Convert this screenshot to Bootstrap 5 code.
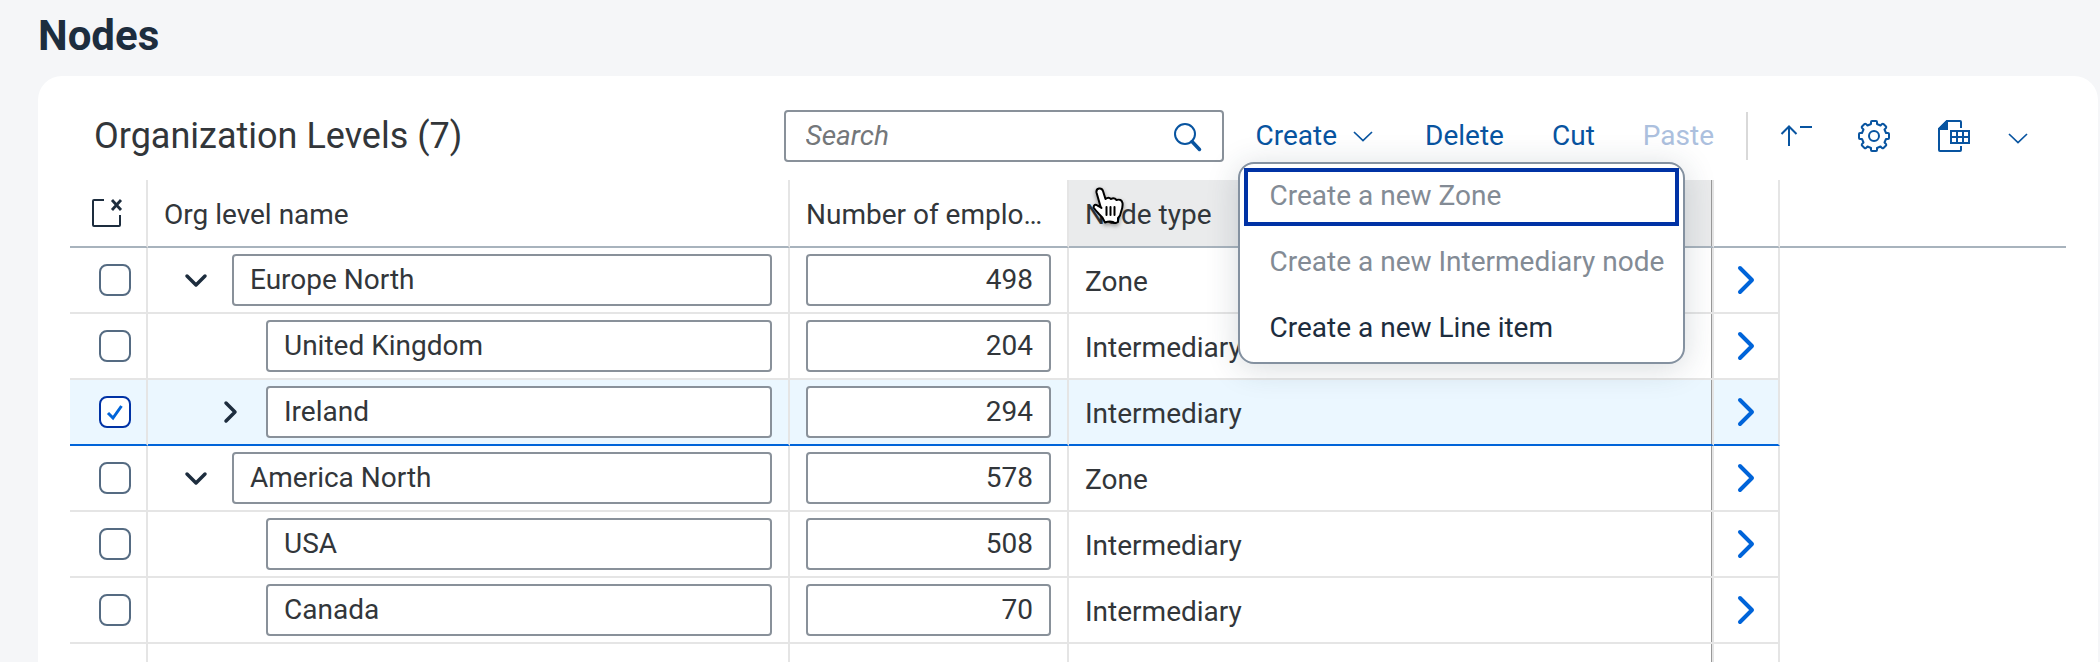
<!DOCTYPE html>
<html lang="en">
<head>
<meta charset="utf-8">
<meta name="viewport" content="width=device-width, initial-scale=1">
<title>Nodes</title>
<link rel="stylesheet" href="https://cdn.jsdelivr.net/npm/bootstrap@5.3.0/dist/css/bootstrap.min.css">
<style>
:root { --ink:#1d2d3e; --text:#32363a; --brand:#0854a0; --field:#89919a; --line:#e5e5e5; --accent:#0064d9; --focus:#0032a5; }
body { background:#f5f6f8; color:var(--text); font-family:Roboto,"Liberation Sans",sans-serif; font-size:28px; line-height:36px; }
.page { padding:12px 2px 0 38px; }
.page-title { font-size:42px; line-height:48px; color:var(--ink); font-weight:700; margin:0 0 16px; }
.panel { background:#fff; border-radius:24px 24px 0 0; padding:24px 32px 0; }
.toolbar { height:72px; margin-bottom:8px; padding:0 38px 0 24px; }
.toolbar h2 { font-size:36px; line-height:40px; margin:0; font-weight:400; }
.search { width:440px; }
.field { border:2px solid var(--field); border-radius:4px; background:#fff; color:var(--text); height:52px; width:100%; padding:0 16px 2px; display:block; font-size:28px; line-height:36px; }
.search .field { padding:0 64px 2px 20px; }
.search .field::placeholder { color:#74777a; font-style:italic; opacity:1; }
.search-go { position:absolute; right:8px; top:9px; width:44px; height:36px; color:var(--brand); }
.tool { border:0; background:none; padding:0; color:var(--brand); display:flex; align-items:center; height:52px; font-size:28px; }
.tool:disabled { color:#acc0de; }
.tool svg, .search-go svg, .expander svg, .go svg, .deselect svg { display:block; }
.split { margin-left:32px; }
.create-group { margin-right:4px; }
.more { margin-left:38px; }
.divider { width:2px; height:48px; background:#d9d9d9; }
.create-menu { top:52px; left:-18px; width:447px; padding:0; border:2px solid #8491a0; border-radius:16px; box-shadow:0 4px 32px rgba(34,53,72,.18); background:#fff; font-size:28px; }
.create-menu .dropdown-item { height:66px; padding:0 0 2px 30px; color:var(--ink); display:flex; align-items:center; background:none; }
.create-menu .dropdown-item:disabled { color:#838b95; }
.create-menu .focused { outline:4px solid var(--focus); outline-offset:-8px; }
.tree { table-layout:fixed; width:100%; border-collapse:separate; border-spacing:0; }
.tree th { height:68px; font-weight:400; padding:4px 16px 0; border-bottom:2px solid #a8b3bd; border-right:2px solid var(--line); white-space:nowrap; }
.tree td { height:66px; padding:0 16px; border-bottom:2px solid var(--line); border-right:2px solid var(--line); }
.tree th:last-child { border-right:0; }
.tree td:last-child { border:0; }
.tree .fixed-edge { box-shadow:inset -1px 0 0 #999; }
.tree th.hovered { background:#eaebec; position:relative; }
.tree tr.picked td:not(:last-child) { background:#ebf7ff; border-bottom-color:var(--accent); }
.tree tr.filler td { height:18px; border-bottom:0; }
.c-check { width:78px; } .c-name { width:642px; } .c-count { width:279px; } .c-type { width:645px; } .c-go { width:66px; }
.tree td.check-cell { padding:0 0 0 29px; }
.tree th.check-cell { padding:4px 0 0 22px; }
.tree .check-cell .form-check-input { width:32px; height:32px; margin:0; border:2px solid #556b82; border-radius:8px; display:block; background-color:#fff; }
.tree .check-cell .form-check-input:checked { border-color:var(--focus); background-image:url("data:image/svg+xml,%3csvg xmlns='http://www.w3.org/2000/svg' viewBox='0 0 28 28'%3e%3cpath d='M7 15l5 5 8.500-12' fill='none' stroke='%230064d9' stroke-width='3'/%3e%3c/svg%3e"); }
.node { padding-left:20px; }
.expander { border:0; background:none; padding:0 8px 0 0; width:64px; height:52px; display:flex; align-items:center; justify-content:center; flex:none; color:var(--ink); }
.leaf { width:98px; flex:none; }
.child .expander { margin-left:34px; }
.tree td.name-cell { padding:0 16px 0 0; }
.tree td.type-cell { padding-top:4px; }
.tree td.go-cell { padding:0; }
.go { display:flex; height:52px; align-items:center; justify-content:center; color:var(--accent); }
.deselect { border:0; background:none; padding:0; color:var(--ink); }
.pointer { position:absolute; left:20px; top:6px; filter:drop-shadow(0 2px 2px rgba(0,0,0,.4)); }
</style>
</head>
<body>
<svg width="0" height="0" class="position-absolute" aria-hidden="true">
  <symbol id="i-down" viewBox="0 0 24 24"><path d="M3 8l9 9 9-9" fill="none" stroke="currentColor" stroke-width="3.500" stroke-linecap="round" stroke-linejoin="round"/></symbol>
  <symbol id="i-right" viewBox="0 0 24 24"><path d="M8 3l9 9-9 9" fill="none" stroke="currentColor" stroke-width="3.500" stroke-linecap="round" stroke-linejoin="round"/></symbol>
  <symbol id="i-go" viewBox="0 0 32 32"><path d="M10 4l12 12-12 12" fill="none" stroke="currentColor" stroke-width="4" stroke-linecap="round" stroke-linejoin="round"/></symbol>
  <symbol id="i-slim" viewBox="0 0 20 12"><path d="M1 2l9 8.500L19 2" fill="none" stroke="currentColor" stroke-width="1.700"/></symbol>
</svg>
<main class="page min-vh-100">
  <h1 class="page-title">Nodes</h1>
  <section class="panel">
    <div class="toolbar d-flex align-items-center">
      <h2 class="me-auto">Organization Levels (7)</h2>
      <div class="search position-relative">
        <input class="field" type="search" placeholder="Search" aria-label="Search">
        <button class="search-go border-0 bg-transparent p-0" type="button" aria-label="Start search">
          <svg width="32" height="32" viewBox="0 0 32 32"><circle cx="13" cy="13" r="10" fill="none" stroke="currentColor" stroke-width="2"/><path d="M20 20.500l7.500 8" stroke="currentColor" stroke-width="3.500" stroke-linecap="round"/></svg>
        </button>
      </div>
      <div class="dropdown split create-group">
        <button class="tool" type="button" aria-expanded="true">Create <svg class="ms-3" width="20" height="12"><use href="#i-slim"/></svg></button>
        <div class="dropdown-menu show create-menu">
          <button class="dropdown-item focused" type="button" disabled>Create a new Zone</button>
          <button class="dropdown-item" type="button" disabled>Create a new Intermediary node</button>
          <button class="dropdown-item" type="button">Create a new Line item</button>
        </div>
      </div>
      <button class="tool ms-5" type="button">Delete</button>
      <button class="tool ms-5" type="button">Cut</button>
      <button class="tool ms-5" type="button" disabled>Paste</button>
      <div class="divider split me-4"></div>
      <button class="tool" type="button" aria-label="Sort"><svg width="48" height="32" viewBox="0 0 48 32"><path d="M17 26V7M9.500 14L17 6.500 24.500 14M28 7h12" fill="none" stroke="currentColor" stroke-width="2"/></svg></button>
      <button class="tool more" type="button" aria-label="Settings"><svg width="32" height="32" viewBox="0 0 32 32" fill="none" stroke="currentColor" stroke-width="2" stroke-linejoin="round"><circle cx="16" cy="16" r="5"/><path d="M13 4V2q0-1 1-1h4q1 0 1 1v2l3.500 1.500L24 4q.8-.6 1.500 0L28 6.500q.6.700 0 1.500l-1.500 1.500L28 13h2q1 0 1 1v4q0 1-1 1h-2l-1.500 3.500L28 24q.6.800 0 1.500L25.500 28q-.7.600-1.500 0l-1.500-1.500L19 28v2q0 1-1 1h-4q-1 0-1-1v-2l-3.500-1.500L8 28q-.8.600-1.500 0L4 25.500q-.6-.7 0-1.500l1.500-1.500L4 19H2q-1 0-1-1v-4q0-1 1-1h2l1.500-3.500L4 8q-.6-.8 0-1.500L6.500 4q.7-.6 1.500 0l1.500 1.500z"/></svg></button>
      <button class="tool ms-5" type="button" aria-label="Export"><svg width="32" height="32" viewBox="0 0 32 32" fill="none" stroke="currentColor" stroke-width="2"><path d="M23 8V2q0-1-1-1H9L1 9v21q0 1 1 1h20q1 0 1-1v-4"/><path d="M9 1v8H1z" fill="currentColor"/><path d="M13 11h18v12H13zM19 11v12M25 11v12M13 17h18"/></svg></button>
      <button class="tool more" type="button" aria-label="Export options"><svg class="mt-1" width="20" height="12"><use href="#i-slim"/></svg></button>
    </div>
    <table class="tree">
      <colgroup><col class="c-check"><col class="c-name"><col class="c-count"><col class="c-type"><col class="c-go"><col></colgroup>
      <thead>
        <tr>
          <th class="check-cell"><button class="deselect" type="button" aria-label="Clear selection"><svg width="32" height="32" viewBox="0 0 32 32" fill="none" stroke="currentColor" stroke-width="2"><path d="M12 5H2q-1 0-1 1v24q0 1 1 1h25q1 0 1-1V20"/><path d="M20 5l9 10M29 5l-9 10" stroke-width="2.800"/></svg></button></th>
          <th>Org level name</th>
          <th title="Number of employees">Number of emplo…</th>
          <th class="hovered fixed-edge">Node type
            <svg class="pointer" width="40" height="44" viewBox="0 0 40 44" fill="#fff" stroke="#000" stroke-width="2" stroke-linejoin="round" stroke-linecap="round"><path d="M11.500 20.500L7.500 6.500Q7 3 10 2.500t4 2.500l2.500 8q3-2.500 5.500 0 3-2 5.500 1 5-1.500 6 3 .5 4-1.500 9-.5 4-3 6V36q-3 2-5 0-4-1-8 .5-2-5.500-6-8.500-3-3-5.500-6.500 .5-4 4-2 2 1 4 2.500z"/><path d="M17.500 21v8M21.500 21v8M25.500 21v8" fill="none"/></svg>
          </th>
          <th></th><th></th>
        </tr>
      </thead>
      <tbody id="rows"></tbody>
    </table>
  </section>
</main>
<script src="https://cdn.jsdelivr.net/npm/bootstrap@5.3.0/dist/js/bootstrap.bundle.min.js"></script>
<script>
const nodes = [
  { name:'Europe North', count:498, type:'Zone', icon:'down' },
  { name:'United Kingdom', count:204, type:'Intermediary', child:true },
  { name:'Ireland', count:294, type:'Intermediary', child:true, icon:'right', picked:true },
  { name:'America North', count:578, type:'Zone', icon:'down' },
  { name:'USA', count:508, type:'Intermediary', child:true },
  { name:'Canada', count:70, type:'Intermediary', child:true }
];
document.getElementById('rows').innerHTML = nodes.map(n => `
  <tr class="${n.picked ? 'picked' : ''}">
    <td class="check-cell"><input class="form-check-input" type="checkbox" aria-label="Select ${n.name}" ${n.picked ? 'checked' : ''}></td>
    <td class="name-cell"><div class="node d-flex ${n.child ? 'child' : ''}">
      ${n.icon ? `<button class="expander" type="button" aria-label="Toggle ${n.name}"><svg width="24" height="24"><use href="#i-${n.icon}"/></svg></button>` : '<span class="leaf"></span>'}
      <input class="field" type="text" aria-label="Org level name" value="${n.name}"></div></td>
    <td><input class="field text-end" type="text" inputmode="numeric" aria-label="Number of employees" value="${n.count}"></td>
    <td class="type-cell fixed-edge">${n.type}</td>
    <td class="go-cell"><a class="go" href="#" aria-label="Open ${n.name}"><svg width="32" height="32"><use href="#i-go"/></svg></a></td>
    <td></td>
  </tr>`).join('') + '<tr class="filler"><td></td><td></td><td></td><td class="fixed-edge"></td><td></td><td></td></tr>';
</script>
</body>
</html>
